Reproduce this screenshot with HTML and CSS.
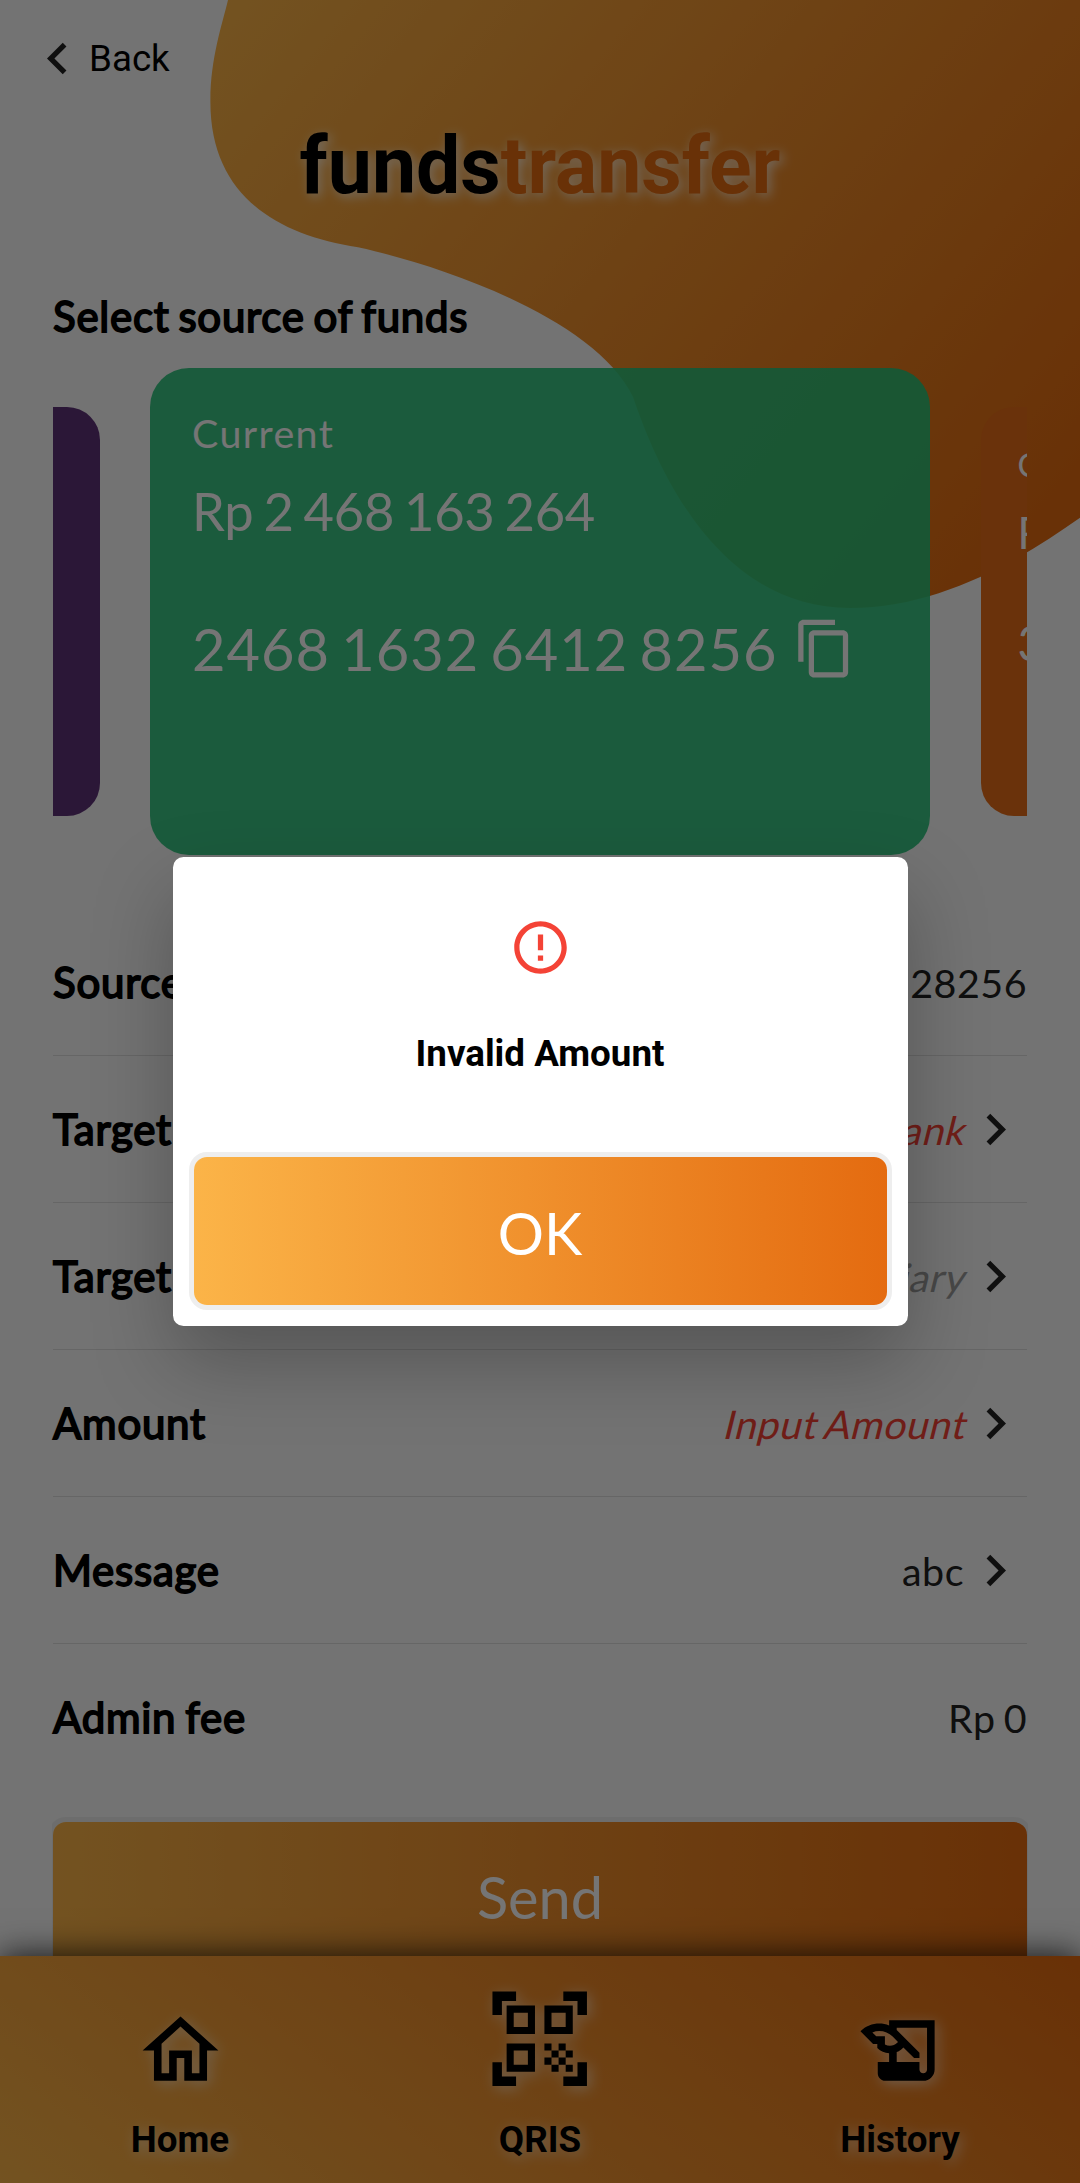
FILE: index.html
```html
<!DOCTYPE html>
<html lang="en">
<head>
<meta charset="utf-8">
<title>Funds transfer</title>
<link rel="stylesheet" href="styles.css">
</head>
<body>
<div class="screen">
  <svg class="blob" viewBox="0 0 1080 640" aria-hidden="true">
    <defs>
      <linearGradient id="sun" gradientUnits="userSpaceOnUse" x1="133" y1="105" x2="897" y2="713">
        <stop offset="0" stop-color="#fbb448"/>
        <stop offset="1" stop-color="#e46b10"/>
      </linearGradient>
    </defs>
    <path fill="url(#sun)" d="M228 0C222 25 210 60 210.4 102C210.4 194 275 235 358 247.3C440 265 595 318 633 396.7C655 462 715 608 850 608C940 608 1020 560 1080 517.7V0Z"/>
  </svg>

  <main class="content">
    <a class="back">
      <svg class="icon" viewBox="0 0 24 24"><path d="M15.41 16.59L10.83 12l4.58-4.59L14 6l-6 6 6 6z"/></svg>
      <span>Back</span>
    </a>
    <h1 class="title">funds<span class="title-accent">transfer</span></h1>
    <h2 class="section-label strong">Select source of funds</h2>

    <div class="carousel">
      <article class="card card-side card-purple"></article>
      <article class="card card-main">
        <div class="card-type">Current</div>
        <div class="card-balance">Rp 2 468 163 264</div>
        <div class="card-number">
          <span>2468 1632 6412 8256</span>
          <svg class="icon" viewBox="0 0 24 24"><path d="M16 1H4c-1.1 0-2 .9-2 2v14h2V3h12V1zm3 4H8c-1.1 0-2 .9-2 2v14c0 1.1.9 2 2 2h11c1.1 0 2-.9 2-2V7c0-1.1-.9-2-2-2zm0 16H8V7h11v14z"/></svg>
        </div>
      </article>
      <article class="card card-side card-orange">
        <div class="card-type">Current</div>
        <div class="card-balance">Rp 3 692 581 470</div>
        <div class="card-number"><span>3692 5814 7036 9258</span></div>
      </article>
    </div>

    <ul class="form">
      <li class="row"><span class="strong">Source</span><span class="value">2468163264128256</span></li>
      <li class="row"><span class="strong">Target Bank</span><span class="value slanted missing">Select Bank</span><svg class="icon" viewBox="0 0 24 24"><path d="M8.59 16.59L13.17 12 8.59 7.41 10 6l6 6-6 6z"/></svg></li>
      <li class="row"><span class="strong">Target Account</span><span class="value slanted hint">Beneficiary</span><svg class="icon" viewBox="0 0 24 24"><path d="M8.59 16.59L13.17 12 8.59 7.41 10 6l6 6-6 6z"/></svg></li>
      <li class="row"><span class="strong">Amount</span><span class="value slanted missing">Input Amount</span><svg class="icon" viewBox="0 0 24 24"><path d="M8.59 16.59L13.17 12 8.59 7.41 10 6l6 6-6 6z"/></svg></li>
      <li class="row"><span class="strong">Message</span><span class="value">abc</span><svg class="icon" viewBox="0 0 24 24"><path d="M8.59 16.59L13.17 12 8.59 7.41 10 6l6 6-6 6z"/></svg></li>
      <li class="row"><span class="strong">Admin fee</span><span class="value">Rp 0</span></li>
    </ul>

    <div class="send-wrap"><div class="button">Send</div></div>
  </main>

  <nav class="nav">
    <div class="nav-item">
      <svg class="nav-icon" viewBox="0 0 24 24"><path d="M12 5.69l5 4.5V18h-2v-6H9v6H7v-7.81l5-4.5M12 3L2 12h3v8h6v-6h2v6h6v-8h3L12 3z"/></svg>
      <span>Home</span>
    </div>
    <div class="nav-item">
      <svg class="nav-icon nav-icon-large" viewBox="0 0 24 24"><path d="M9.5 6.5v3h-3v-3h3M11 5H5v6h6V5zM9.5 14.5v3h-3v-3h3M11 13H5v6h6v-6zM17.5 6.5v3h-3v-3h3M19 5h-6v6h6V5zM13 13h1.5v1.5H13V13zM14.5 14.5H16V16h-1.5v-1.5zM16 13h1.5v1.5H16V13zM13 16h1.5v1.5H13V16zM14.5 17.5H16V19h-1.5v-1.5zM16 16h1.5v1.5H16V16zM17.5 14.5H19V16h-1.5v-1.5zM17.5 17.5H19V19h-1.5v-1.5zM22 7h-2V4h-3V2h5v5zM22 22v-5h-2v3h-3v2h5zM2 22h5v-2H4v-3H2v5zM2 2v5h2V4h3V2H2z"/></svg>
      <span>QRIS</span>
    </div>
    <div class="nav-item">
      <svg class="nav-icon" viewBox="0 0 24 24"><path d="M9 4v1.38c-.83-.33-1.72-.5-2.61-.5-1.79 0-3.58.68-4.95 2.05l3.33 3.33h1.11v1.11c.86.86 1.98 1.31 3.11 1.36V15H6v3c0 1.1.9 2 2 2h10c1.66 0 3-1.34 3-3V4H9zm-1.11 6.41V8.26H5.61L4.57 7.22a5.07 5.07 0 0 1 1.82-.34c1.34 0 2.59.52 3.54 1.46l1.41 1.41-.2.2c-.51.51-1.19.8-1.92.8-.47 0-.93-.12-1.33-.34zM19 17c0 .55-.45 1-1 1s-1-.45-1-1v-2h-6v-2.59c.57-.23 1.1-.57 1.56-1.03l.2-.2L15.59 14H17v-1.41l-6-5.97V6h8v11z"/></svg>
      <span>History</span>
    </div>
  </nav>

  <div class="barrier">
    <div class="dialog" role="alertdialog">
      <svg class="dialog-icon" viewBox="0 0 24 24"><path d="M11 15h2v2h-2zm0-8h2v6h-2zm.99-5C6.47 2 2 6.48 2 12s4.47 10 9.99 10C17.52 22 22 17.52 22 12S17.52 2 11.99 2zM12 20c-4.42 0-8-3.58-8-8s3.58-8 8-8 8 3.58 8 8-3.58 8-8 8z"/></svg>
      <p class="dialog-text">Invalid Amount</p>
      <div class="button">OK</div>
    </div>
  </div>
</div>
</body>
</html>
```
FILE: styles.css
```css
* { box-sizing: border-box; }

body {
  margin: 0;
  font-family: Roboto, "Liberation Sans", sans-serif;
  font-size: 36.75px;
  color: #000;
}

.screen {
  position: relative;
  width: 1080px;
  height: 2183px;
  overflow: hidden;
  background: #fafafa;
  display: flex;
  flex-direction: column;
}

.blob {
  position: absolute;
  top: 0;
  left: 0;
  width: 1080px;
  height: 640px;
}

.content {
  position: relative;
  flex: 1;
  min-height: 0;
  overflow: hidden;
  padding: 27px 53px 0;
}

.icon {
  flex: none;
  width: 63px;
  height: 63px;
  fill: #212121;
}

.back {
  display: flex;
  align-items: center;
  height: 63px;
  margin-left: -27px;
}

.back span { line-height: 44px; }

.title {
  margin: 30px 0 0;
  font-size: 78.75px;
  line-height: 92px;
  font-weight: 700;
  text-align: center;
  text-shadow: 3px 3px 12px rgba(255, 255, 255, .75);
}

.title-accent { color: #e46b10; }

.strong {
  font-family: Lato, "Liberation Sans", sans-serif;
  font-size: 42px;
  font-weight: 400;
  letter-spacing: .75px;
  word-spacing: -2.6px;
  -webkit-text-stroke: 1.8px #000;
}

.section-label {
  margin: 79px 0 0;
  line-height: 50px;
}

.carousel {
  display: flex;
  justify-content: center;
  align-items: center;
  gap: 50.5px;
  height: 487px;
  margin-top: 27px;
  overflow: hidden;
  font-family: Lato, "Liberation Sans", sans-serif;
  color: #fff;
}

.card {
  flex: none;
  white-space: nowrap;
}

.card-main {
  width: 780px;
  height: 487px;
  padding: 41px 41px 0 42px;
  border-radius: 39px;
  background: rgba(41, 193, 121, .91);
}

.card-main .card-type {
  font-size: 39.4px;
  line-height: 48px;
  letter-spacing: 1.4px;
}
.card-main .card-balance {
  margin-top: 22px;
  font-size: 52.5px;
  line-height: 64px;
  letter-spacing: -.3px;
  word-spacing: -3.1px;
}
.card-main .card-number {
  display: flex;
  align-items: center;
  gap: 16px;
  height: 70px;
  margin-top: 70px;
  font-size: 57.75px;
  letter-spacing: 1px;
  word-spacing: -4.6px;
}
.card-main .icon { fill: #fff; }

.card-side {
  width: 655px;
  height: 409px;
  padding: 37.6px 37px 0;
  border-radius: 33px;
}

.card-side .card-type { font-size: 32.8px; line-height: 40px; }
.card-side .card-balance { margin-top: 20px; font-size: 43.6px; line-height: 54px; }
.card-side .card-number { margin-top: 55.6px; font-size: 48px; line-height: 58px; }

.card-purple { background: #5f3279; }
.card-orange { background: #e66d18; }

.form {
  list-style: none;
  margin: 54px 0 0;
  padding: 0;
}

.row {
  display: flex;
  align-items: center;
  height: 147px;
  border-bottom: 1px solid #dedede;
}

.row:last-child { border-bottom-color: transparent; }

.value {
  margin-left: auto;
  font-family: Lato, "Liberation Sans", sans-serif;
  font-size: 39.4px;
  letter-spacing: .5px;
  word-spacing: -2.4px;
  color: #212121;
}

.slanted {
  transform: skewX(-14deg);
  transform-origin: 50% 80%;
}

.missing { color: #f44336; }
.hint { color: #9e9e9e; }

.send-wrap {
  margin: 26px -1px 0;
  padding: 5px 1px;
  overflow: hidden;
}

.button {
  height: 147.5px;
  border-radius: 13px;
  background: linear-gradient(90deg, #fbb448, #e46b10);
  box-shadow: 0 0 0 5px #eee;
  color: #fff;
  font-family: Lato, "Liberation Sans", sans-serif;
  font-size: 57.75px;
  line-height: 149px;
  text-align: center;
}

.nav {
  position: relative;
  flex: none;
  display: grid;
  grid-template-columns: repeat(3, 1fr);
  height: 227px;
  padding-bottom: 21px;
  background: linear-gradient(38deg, #fbb448, #e46b10);
  box-shadow: 0 0 32px rgba(0, 0, 0, .85);
}

.nav-item {
  display: flex;
  flex-direction: column;
  align-items: center;
  justify-content: flex-end;
  font-weight: 700;
  line-height: 44px;
  text-shadow: 3px 3px 14px rgba(255, 255, 255, .6);
}

.nav-icon {
  width: 91px;
  height: 91px;
  margin-bottom: 22px;
  filter: drop-shadow(3px 3px 7px rgba(255, 255, 255, .6));
}

.nav-icon-large {
  width: 113.4px;
  height: 113.4px;
  margin-bottom: 23px;
}

.barrier {
  position: absolute;
  inset: 0;
  display: flex;
  align-items: center;
  justify-content: center;
  background: rgba(0, 0, 0, .541);
}

.dialog {
  display: flex;
  flex-direction: column;
  width: 735px;
  height: 468.5px;
  padding: 58.5px 21px 21px;
  border-radius: 10.5px;
  background: #fff;
  box-shadow: 0 36px 80px rgba(0, 0, 0, .26);
}

.dialog-icon {
  align-self: center;
  width: 63px;
  height: 63px;
  fill: #f44336;
}

.dialog-text {
  margin: 53px 0 0;
  font-weight: 700;
  line-height: 44px;
  text-align: center;
}

.dialog .button {
  margin-top: auto;
  line-height: 151px;
}
```
